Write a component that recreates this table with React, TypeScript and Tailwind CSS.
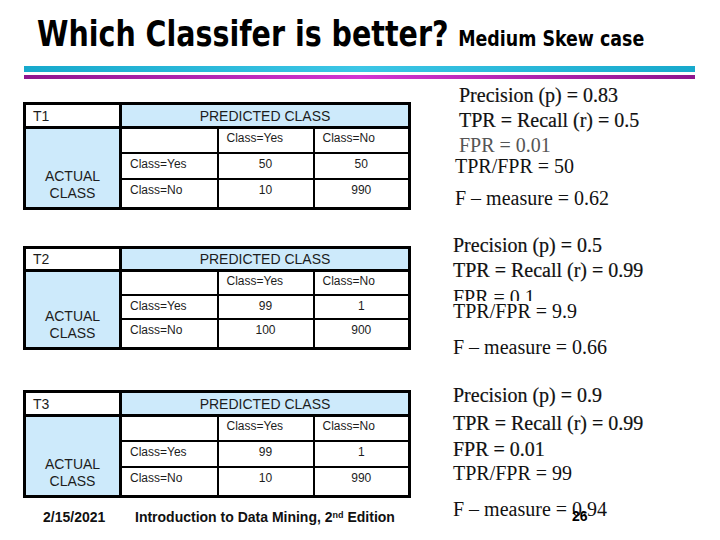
import React from "react";

type Row = { label: string; a: string; b: string };

function Matrix({ name, rows, compact }: { name: string; rows: Row[]; compact?: boolean }) {
  const cell = "border-2 border-black";
  return (
    <table className="border-collapse table-fixed border-[3px] border-black w-[385px] text-[#1c1c1c] font-['Liberation_Sans',Arial,sans-serif]">
      <colgroup>
        <col className="w-[96px]" />
        <col className="w-[97px]" />
        <col className="w-[96px]" />
        <col className="w-[96px]" />
      </colgroup>
      <tbody>
        <tr className={compact ? "h-[23px]" : "h-[24px]"}>
          <td className={`${cell} border-r-[3px] border-b-[3px] bg-white pl-[7px] text-[14px] leading-[16px] align-middle`}>{name}</td>
          <td colSpan={3} className={`${cell} border-b-[3px] bg-[#cdeafb] text-center text-[14px] leading-[16px] align-middle`}>PREDICTED CLASS</td>
        </tr>
        <tr className={compact ? "h-[24px]" : "h-[25px]"}>
          <td rowSpan={3} className={`${cell} border-r-[3px] bg-[#cdeafb] text-center align-bottom pb-[5px] text-[14px] leading-[17px]`}>
            ACTUAL<br />CLASS
          </td>
          <td className={`${cell} bg-white`}></td>
          <td className={`${cell} bg-white pl-[8px] pt-[2px] text-[12px] leading-[14px] align-top`}>Class=Yes</td>
          <td className={`${cell} bg-white pl-[8px] pt-[2px] text-[12px] leading-[14px] align-top`}>Class=No</td>
        </tr>
        {rows.map((r) => (
          <tr
            key={r.label}
            className={
              r.label === "Class=Yes"
                ? compact
                  ? "h-[24px]"
                  : "h-[26px]"
                : compact
                ? "h-[30px]"
                : "h-[30px]"
            }
          >
            <td className={`${cell} bg-white pl-[8px] pt-[3px] text-[12px] leading-[14px] align-top`}>{r.label}</td>
            <td className={`${cell} bg-white text-center pt-[3px] text-[12px] leading-[14px] align-top`}>{r.a}</td>
            <td className={`${cell} bg-white text-center pt-[3px] text-[12px] leading-[14px] align-top`}>{r.b}</td>
          </tr>
        ))}
      </tbody>
    </table>
  );
}

const heavy = "[-webkit-text-stroke:0.2px_#111]";

export default function App() {
  return (
    <div className="relative w-[720px] h-[540px] bg-white overflow-hidden">
      {/* Title */}
      <div className="h-[66px] pl-[37px] pt-[12px]">
        <div className="origin-left scale-x-[0.88] whitespace-nowrap font-['DejaVu_Sans_Condensed','DejaVu_Sans',sans-serif] font-bold text-black flex items-baseline">
          <span className="text-[36px] leading-[44px]">Which Classifer is better?</span>
          <span className="text-[22px] leading-[28px] ml-[11px]">Medium Skew case</span>
        </div>
      </div>
      {/* Rules */}
      <div className="ml-[24px] w-[671px]">
        <div className="h-[6px] bg-[linear-gradient(90deg,#17a9cc,#3cc6e6_50%,#17a9cc)]" />
        <div className="h-[3px]" />
        <div className="h-[4px] bg-[linear-gradient(90deg,#8e168e,#d235d2_50%,#8e168e)]" />
      </div>

      <div className="flex">
        {/* Left: tables */}
        <div className="w-[453px] shrink-0 pl-[23px]">
          <div className="mt-[23px]">
            <Matrix
              name="T1"
              rows={[
                { label: "Class=Yes", a: "50", b: "50" },
                { label: "Class=No", a: "10", b: "990" },
              ]}
            />
          </div>
          <div className="mt-[36px]">
            <Matrix
              name="T2"
              compact
              rows={[
                { label: "Class=Yes", a: "99", b: "1" },
                { label: "Class=No", a: "100", b: "900" },
              ]}
            />
          </div>
          <div className="mt-[40px]">
            <Matrix
              name="T3"
              rows={[
                { label: "Class=Yes", a: "99", b: "1" },
                { label: "Class=No", a: "10", b: "990" },
              ]}
            />
          </div>
          <div className="mt-[11px] flex font-['Liberation_Sans',Arial,sans-serif] font-bold text-[14px] leading-[16px] text-[#111]">
            <span className="ml-[20px] w-[92px]">2/15/2021</span>
            <span>
              Introduction to Data Mining, 2<sup className="text-[9px]">nd</sup> Edition
            </span>
          </div>
        </div>

        {/* Right: measures */}
        <div className="font-['Liberation_Serif','Times_New_Roman',serif] text-[20px] leading-[20px] text-[#111] whitespace-nowrap">
          <div className={`mt-[6px] h-[20px] pl-[6px] ${heavy}`}>Precision (p) = 0.83</div>
          <div className={`mt-[5px] h-[20px] pl-[6px] ${heavy}`}>TPR = Recall (r) = 0.5</div>
          <div className="mt-[5px] h-[20px] pl-[6px] text-[#555]">FPR = 0.01</div>
          <div className="mt-[1px] h-[20px] pl-[2px]">TPR/FPR = 50</div>
          <div className="mt-[12px] h-[20px] pl-[2px]">F – measure = 0.62</div>

          <div className={`mt-[27px] h-[20px] ${heavy}`}>Precision (p) = 0.5</div>
          <div className={`mt-[5px] h-[20px] ${heavy}`}>TPR = Recall (r) = 0.99</div>
          <div className="mt-[7px] h-[14px] overflow-hidden">FPR = 0.1</div>
          <div className="mt-0 h-[20px]">TPR/FPR = 9.9</div>
          <div className="mt-[16px] h-[20px]">F – measure = 0.66</div>

          <div className={`mt-[28px] h-[20px] ${heavy}`}>Precision (p) = 0.9</div>
          <div className={`mt-[8px] h-[20px] ${heavy}`}>TPR = Recall (r) = 0.99</div>
          <div className={`mt-[6px] h-[20px] ${heavy}`}>FPR = 0.01</div>
          <div className="mt-[4px] h-[20px]">TPR/FPR = 99</div>
          <div className="mt-[16px] h-[20px]">F – measure = 0.94</div>
        </div>
      </div>

      {/* Slide number overlay */}
      <div className="absolute left-[572px] top-[508px] font-['Liberation_Sans',Arial,sans-serif] font-bold text-[14px] leading-[16px] text-black">
        26
      </div>
    </div>
  );
}
